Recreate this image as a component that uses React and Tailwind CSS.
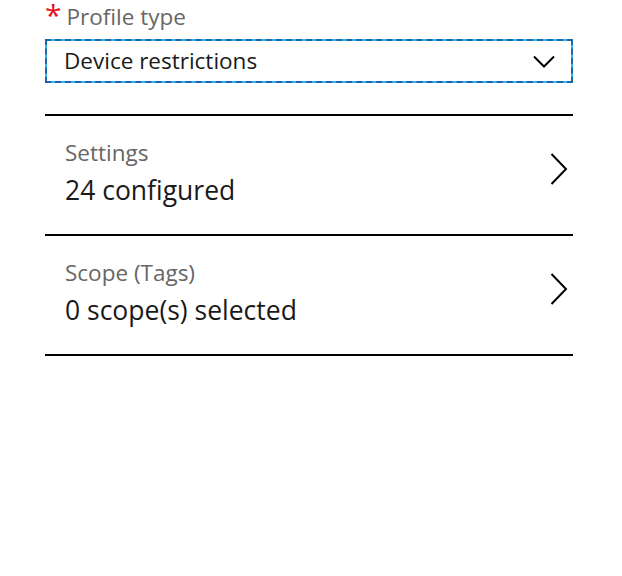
const ROWS = [
  { label: "Settings", value: "24 configured" },
  { label: "Scope (Tags)", value: "0 scope(s) selected" },
];

function ChevronDownIcon() {
  return (
    <svg width="22" height="13" viewBox="0 0 22 13" fill="none" stroke="black" strokeWidth="2">
      <polyline points="1,1.5 11,11.5 21,1.5" />
    </svg>
  );
}

function ChevronRightIcon() {
  return (
    <svg width="18" height="32" viewBox="0 0 18 32" fill="none" stroke="black" strokeWidth="2">
      <polyline points="1.5,1 16,16 1.5,31" />
    </svg>
  );
}

export default function App() {
  return (
    <div className="h-[576px] w-[622px] bg-white font-['Open_Sans',sans-serif]">
      <div className="px-[45px]">
        <div className="flex h-[33px] items-start gap-[5px]">
          <span className="text-[30px] leading-[30px] text-[#e81123]">*</span>
          <span className="mt-[2px] text-[22.5px] leading-[30px] text-[#666666]">Profile type</span>
        </div>
        <div className="mt-[6px] flex h-[44px] w-[528px] items-center justify-between border-2 border-[#2bb5ef] pl-[17px] pr-[16px] outline-2 outline-dashed -outline-offset-2 outline-[#1f63a8]">
          <span className="text-[22.5px] leading-[30px] text-[#1a1a1a]">Device restrictions</span>
          <ChevronDownIcon />
        </div>
        <div className="mt-[31px] w-[528px] border-t-2 border-black">
          {ROWS.map((row) => (
            <div
              key={row.label}
              className="flex h-[120px] items-center justify-between border-b-2 border-black pl-[20px] pr-[5px]"
            >
              <div className="-mt-[5px]">
                <div className="text-[22.5px] leading-[30px] text-[#666666]">{row.label}</div>
                <div className="mt-[5px] text-[26.5px] leading-[34px] text-[#1a1a1a]">{row.value}</div>
              </div>
              <div className="-mt-[12px]">
                <ChevronRightIcon />
              </div>
            </div>
          ))}
        </div>
      </div>
    </div>
  );
}
